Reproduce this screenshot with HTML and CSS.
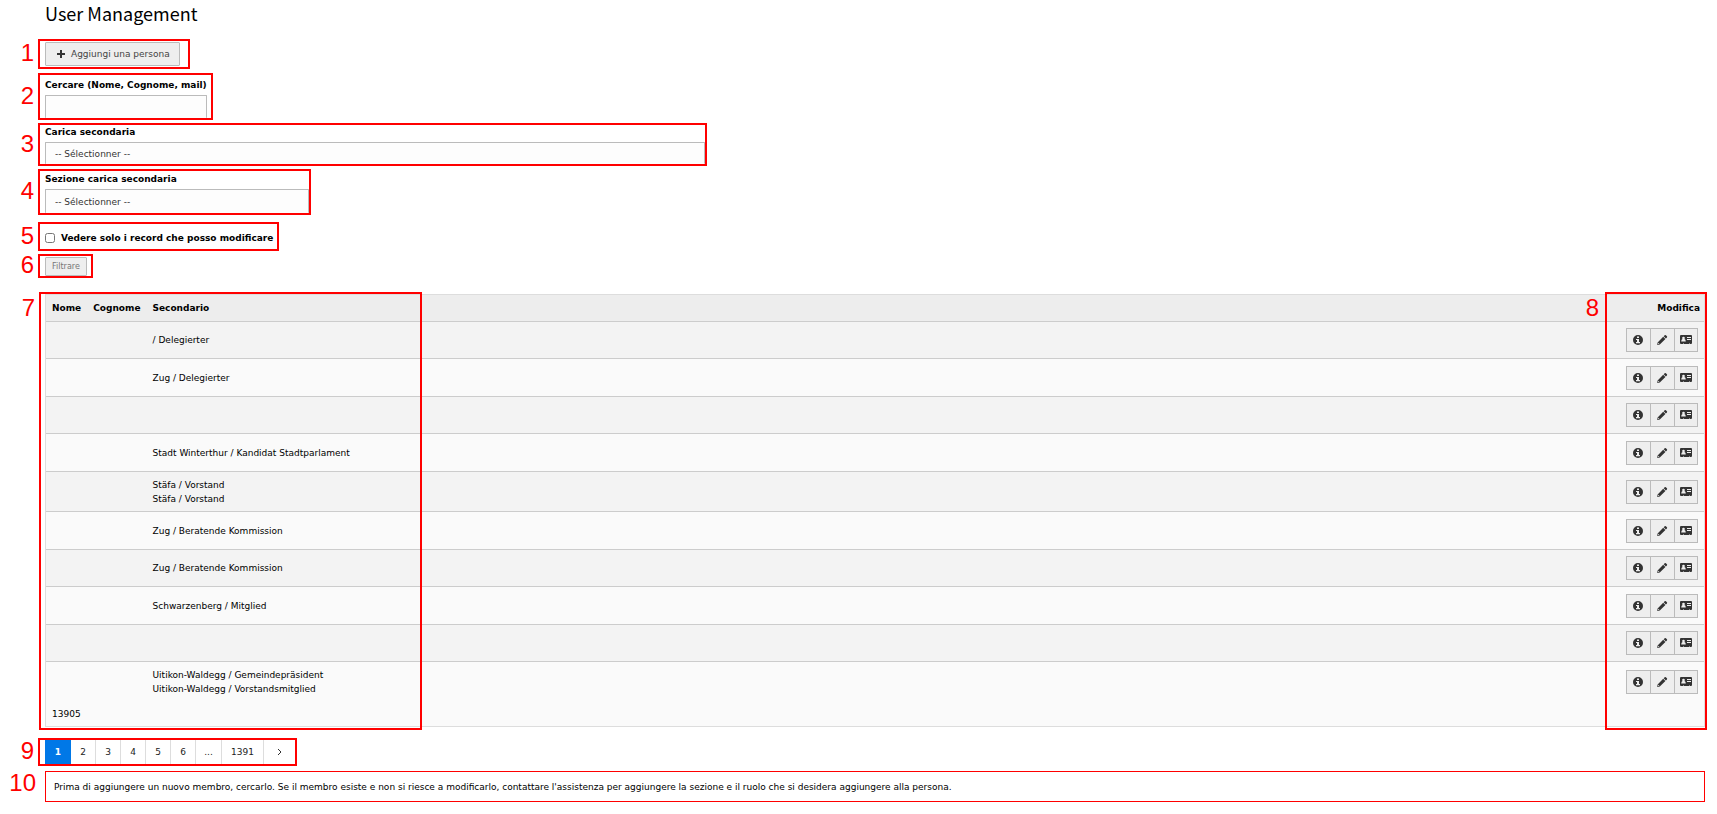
FILE: index.html
```html
<!DOCTYPE html>
<html lang="it">
  <head>
    <meta charset="UTF-8" />
    <meta name="viewport" content="width=device-width, initial-scale=1.0" />
    <title>User Management</title>
    <link rel="stylesheet" href="styles.css">
  </head>
  <body>
    <!-- Shared icons -->
    <svg class="sprite" aria-hidden="true">
      <symbol id="icon-plus" viewBox="0 0 12 12">
        <path d="M5 2h2v3h3v2H7v3H5V7H2V5h3z" />
      </symbol>
      <symbol id="icon-info" viewBox="0 0 12 12">
        <path fill-rule="evenodd" d="M6 1a5 5 0 1 0 0 10A5 5 0 0 0 6 1zM5 2.500h2V4H5zM4 5h3v3h1v1.300H4V8h1V6H4z" />
      </symbol>
      <symbol id="icon-pencil" viewBox="0 0 12 12">
        <path fill-rule="evenodd" d="M8.700 1.300q.6-.6 1.200 0l1 1q.6.600 0 1.200l-1 1-2.200-2.200zM7.200 2.800l2.200 2.200-5.600 5.600L1.200 11l.4-2.600zM2.300 8.700l-.2 1.400 1.400-.2z" />
      </symbol>
      <symbol id="icon-card" viewBox="0 0 14 12">
        <path fill-rule="evenodd" d="M2 1h10q1 0 1 1v7q0 1-1 1h-1V9.500h-1V10H5V9.500H4V10H2Q1 10 1 9V2q0-1 1-1zM4.500 2.800a1.300 1.300 0 0 0-.9 2.300Q2.300 5.500 2.200 7.500h4.600Q6.700 5.500 5.400 5.100A1.300 1.300 0 0 0 4.500 2.800zM8 3v1h4V3zM8 5v1h4V5z" />
      </symbol>
    </svg>

    <h1>User Management</h1>

    <div class="step step-add">
      <span class="step-number">1</span>
      <button type="button" class="btn btn-add"><svg class="icon"><use href="#icon-plus" /></svg>Aggiungi una persona</button>
    </div>

    <form class="filters">
      <div class="step step-search">
        <span class="step-number">2</span>
        <label for="search">Cercare (Nome, Cognome, mail)</label>
        <input type="text" id="search" class="field" />
      </div>
      <div class="step step-role">
        <span class="step-number">3</span>
        <label for="role">Carica secondaria</label>
        <select id="role" class="field">
          <option>-- Sélectionner --</option>
        </select>
      </div>
      <div class="step step-section">
        <span class="step-number">4</span>
        <label for="section">Sezione carica secondaria</label>
        <select id="section" class="field">
          <option>-- Sélectionner --</option>
        </select>
      </div>
      <div class="step step-editable">
        <span class="step-number">5</span>
        <input type="checkbox" id="editable" />
        <label for="editable">Vedere solo i record che posso modificare</label>
      </div>
      <div class="step step-submit">
        <span class="step-number">6</span>
        <button type="button" class="btn btn-filter">Filtrare</button>
      </div>
    </form>

    <div class="list">
      <table>
        <thead>
          <tr>
            <th>Nome</th>
            <th>Cognome</th>
            <th class="col-role">Secondario</th>
            <th class="col-edit">Modifica</th>
          </tr>
        </thead>
        <tbody>
          <tr>
            <td></td>
            <td></td>
            <td>/ Delegierter</td>
            <td><div class="actions"><button type="button" aria-label="Info"><svg class="icon"><use href="#icon-info" /></svg></button><button type="button" aria-label="Modifica"><svg class="icon"><use href="#icon-pencil" /></svg></button><button type="button" aria-label="Scheda"><svg class="icon icon-wide"><use href="#icon-card" /></svg></button></div></td>
          </tr>
          <tr>
            <td></td>
            <td></td>
            <td>Zug / Delegierter</td>
            <td><div class="actions"><button type="button" aria-label="Info"><svg class="icon"><use href="#icon-info" /></svg></button><button type="button" aria-label="Modifica"><svg class="icon"><use href="#icon-pencil" /></svg></button><button type="button" aria-label="Scheda"><svg class="icon icon-wide"><use href="#icon-card" /></svg></button></div></td>
          </tr>
          <tr>
            <td></td>
            <td></td>
            <td></td>
            <td><div class="actions"><button type="button" aria-label="Info"><svg class="icon"><use href="#icon-info" /></svg></button><button type="button" aria-label="Modifica"><svg class="icon"><use href="#icon-pencil" /></svg></button><button type="button" aria-label="Scheda"><svg class="icon icon-wide"><use href="#icon-card" /></svg></button></div></td>
          </tr>
          <tr>
            <td></td>
            <td></td>
            <td>Stadt Winterthur / Kandidat Stadtparlament</td>
            <td><div class="actions"><button type="button" aria-label="Info"><svg class="icon"><use href="#icon-info" /></svg></button><button type="button" aria-label="Modifica"><svg class="icon"><use href="#icon-pencil" /></svg></button><button type="button" aria-label="Scheda"><svg class="icon icon-wide"><use href="#icon-card" /></svg></button></div></td>
          </tr>
          <tr>
            <td></td>
            <td></td>
            <td>Stäfa / Vorstand<br />Stäfa / Vorstand</td>
            <td><div class="actions"><button type="button" aria-label="Info"><svg class="icon"><use href="#icon-info" /></svg></button><button type="button" aria-label="Modifica"><svg class="icon"><use href="#icon-pencil" /></svg></button><button type="button" aria-label="Scheda"><svg class="icon icon-wide"><use href="#icon-card" /></svg></button></div></td>
          </tr>
          <tr>
            <td></td>
            <td></td>
            <td>Zug / Beratende Kommission</td>
            <td><div class="actions"><button type="button" aria-label="Info"><svg class="icon"><use href="#icon-info" /></svg></button><button type="button" aria-label="Modifica"><svg class="icon"><use href="#icon-pencil" /></svg></button><button type="button" aria-label="Scheda"><svg class="icon icon-wide"><use href="#icon-card" /></svg></button></div></td>
          </tr>
          <tr>
            <td></td>
            <td></td>
            <td>Zug / Beratende Kommission</td>
            <td><div class="actions"><button type="button" aria-label="Info"><svg class="icon"><use href="#icon-info" /></svg></button><button type="button" aria-label="Modifica"><svg class="icon"><use href="#icon-pencil" /></svg></button><button type="button" aria-label="Scheda"><svg class="icon icon-wide"><use href="#icon-card" /></svg></button></div></td>
          </tr>
          <tr>
            <td></td>
            <td></td>
            <td>Schwarzenberg / Mitglied</td>
            <td><div class="actions"><button type="button" aria-label="Info"><svg class="icon"><use href="#icon-info" /></svg></button><button type="button" aria-label="Modifica"><svg class="icon"><use href="#icon-pencil" /></svg></button><button type="button" aria-label="Scheda"><svg class="icon icon-wide"><use href="#icon-card" /></svg></button></div></td>
          </tr>
          <tr>
            <td></td>
            <td></td>
            <td></td>
            <td><div class="actions"><button type="button" aria-label="Info"><svg class="icon"><use href="#icon-info" /></svg></button><button type="button" aria-label="Modifica"><svg class="icon"><use href="#icon-pencil" /></svg></button><button type="button" aria-label="Scheda"><svg class="icon icon-wide"><use href="#icon-card" /></svg></button></div></td>
          </tr>
          <tr>
            <td></td>
            <td></td>
            <td>Uitikon-Waldegg / Gemeindepräsident<br />Uitikon-Waldegg / Vorstandsmitglied</td>
            <td><div class="actions"><button type="button" aria-label="Info"><svg class="icon"><use href="#icon-info" /></svg></button><button type="button" aria-label="Modifica"><svg class="icon"><use href="#icon-pencil" /></svg></button><button type="button" aria-label="Scheda"><svg class="icon icon-wide"><use href="#icon-card" /></svg></button></div></td>
          </tr>
        </tbody>
        <tfoot>
          <tr>
            <td colspan="4">13905</td>
          </tr>
        </tfoot>
      </table>
      <!-- Outlines over the data and action columns -->
      <div class="outline outline-data"><span class="step-number">7</span></div>
      <div class="outline outline-edit"><span class="step-number">8</span></div>
    </div>

    <nav class="step step-pages">
      <span class="step-number">9</span>
      <a href="#" class="current">1</a>
      <a href="#">2</a>
      <a href="#">3</a>
      <a href="#">4</a>
      <a href="#">5</a>
      <a href="#">6</a>
      <span class="gap">...</span>
      <a href="#" class="last">1391</a>
      <a href="#" class="next" aria-label="Avanti"><svg viewBox="0 0 6 8"><path d="M1 1l3 3-3 3" /></svg></a>
    </nav>

    <p class="notice">
      <span class="step-number">10</span>
      Prima di aggiungere un nuovo membro, cercarlo. Se il membro esiste e non si riesce a modificarlo, contattare l'assistenza per aggiungere la sezione e il ruolo che si desidera aggiungere alla persona.
    </p>
  </body>
</html>
```

FILE: styles.css
```css
* {
  box-sizing: border-box;
}
body {
  margin: 0;
  padding: 0 12px 10px 38px;
  font-family: "DejaVu Sans", Verdana, sans-serif;
  font-size: 9px;
  line-height: 14px;
  color: #000;
  background-color: #fff;
}
button,
input,
select {
  font: inherit;
  margin: 0;
}
.sprite {
  display: none;
}
.icon {
  width: 12px;
  height: 12px;
  fill: #333;
}
.icon-wide {
  width: 14px;
}
h1 {
  margin: 0 0 12px 7px;
  font-family: "Noto Sans CJK SC", "Open Sans", sans-serif;
  font-size: 18px;
  font-weight: normal;
  line-height: 27px;
}

/* Numbered red boxes */
.step {
  position: relative;
  width: fit-content;
  border: 2px solid #f00;
  padding: 0 4px 0 5px;
}
.step-number {
  position: absolute;
  top: 0;
  bottom: 2px;
  right: 100%;
  display: flex;
  align-items: center;
  margin-right: 6px;
  font-family: "Liberation Sans", Arial, sans-serif;
  font-size: 24px;
  font-weight: normal;
  color: #f00;
}
.step label {
  display: block;
  font-weight: bold;
}

.btn {
  display: flex;
  align-items: center;
  border: 1px solid #bbb;
  border-radius: 1px;
  background-color: #eee;
  color: #444;
}
.step-add {
  height: 30px;
  padding-top: 1px;
  padding-right: 8px;
}
.btn-add {
  height: 24px;
  gap: 4px;
  padding: 0 9px;
}
.btn-filter {
  height: 19px;
  padding: 0 6px;
  font-size: 8px;
  color: #777;
}

.filters {
  display: flex;
  flex-direction: column;
  gap: 3px;
  margin-top: 4px;
}
.field {
  display: block;
  width: 100%;
  height: 24px;
  margin-top: 3px;
  border: 1px solid #bbb;
  border-bottom: 0;
  border-radius: 1px;
  background-color: #fdfdfd;
  color: #333;
  padding: 0 9px;
  appearance: none;
}
.step-search {
  padding-top: 3px;
}
.step-search .field {
  height: 23px;
}
.step-role {
  width: 669px;
  max-width: 100%;
  padding-right: 0;
}
.step-role .field {
  height: 22px;
}
.step-section {
  width: 273px;
  padding-top: 1px;
  padding-right: 0;
}
.step-editable {
  display: flex;
  align-items: center;
  gap: 6px;
  height: 29px;
  margin-top: 4px;
  padding-top: 3px;
}
.step-editable input {
  width: 10px;
  height: 10px;
}
.step-submit {
  height: 24px;
  padding-top: 1px;
}

.list {
  position: relative;
  margin: 16px 0 0 7px;
}
table {
  width: 100%;
  border: 1px solid #ddd;
  border-spacing: 0;
  white-space: nowrap;
}
th,
td {
  padding: 0 6px;
  text-align: left;
}
th {
  height: 27px;
  border-bottom: 1px solid #ccc;
  background-color: #ededed;
}
.col-role {
  width: 100%;
}
th.col-edit {
  padding-right: 4px;
  text-align: right;
}
tbody td {
  height: 38px;
  border-bottom: 1px solid #ccc;
  background-color: #fafafa;
}
tbody tr:nth-child(odd) td {
  height: 37px;
  background-color: #f3f3f3;
}
tbody tr:nth-child(5) td {
  height: 40px;
}
tbody tr:last-child td {
  height: 39px;
  border-bottom: 0;
}
tfoot td {
  height: 25px;
  background-color: #fafafa;
}
.actions {
  display: flex;
  justify-content: flex-end;
}
.actions button {
  display: flex;
  align-items: center;
  justify-content: center;
  width: 24px;
  height: 24px;
  border: 1px solid #bbb;
  border-right: 0;
  background-color: #eee;
  padding: 0 1px 0 0;
}
.actions button:last-child {
  border-right: 1px solid #bbb;
  padding: 0;
}
.outline {
  position: absolute;
  top: -2px;
  bottom: -3px;
  border: 2px solid #f00;
  pointer-events: none;
}
.outline .step-number {
  top: 4px;
  bottom: auto;
  line-height: 20px;
}
.outline-data {
  left: -6px;
  width: 383px;
}
.outline-edit {
  right: -2px;
  width: 102px;
}
.outline-edit .step-number {
  margin-right: 8px;
}

.step-pages {
  display: flex;
  height: 28px;
  margin-top: 11px;
  padding-right: 0;
}
.step-pages a,
.gap {
  display: flex;
  align-items: center;
  justify-content: center;
  width: 25px;
  border-right: 1px solid #ddd;
  color: #222;
  text-decoration: none;
}
.step-pages .current {
  width: 26px;
  border: 0;
  background-color: #0078e7;
  color: #fff;
  font-weight: bold;
}
.step-pages .gap {
  width: 26px;
}
.step-pages .last {
  width: 42px;
}
.step-pages .next {
  width: 31px;
  border: 0;
}
.next svg {
  width: 6px;
  height: 8px;
  fill: none;
  stroke: #333;
}

.notice {
  position: relative;
  margin: 5px 0 0 7px;
  border: 1px solid #f00;
  padding: 8px 8px 7px;
}
.notice .step-number {
  bottom: 8px;
  margin-right: 10px;
}
```
